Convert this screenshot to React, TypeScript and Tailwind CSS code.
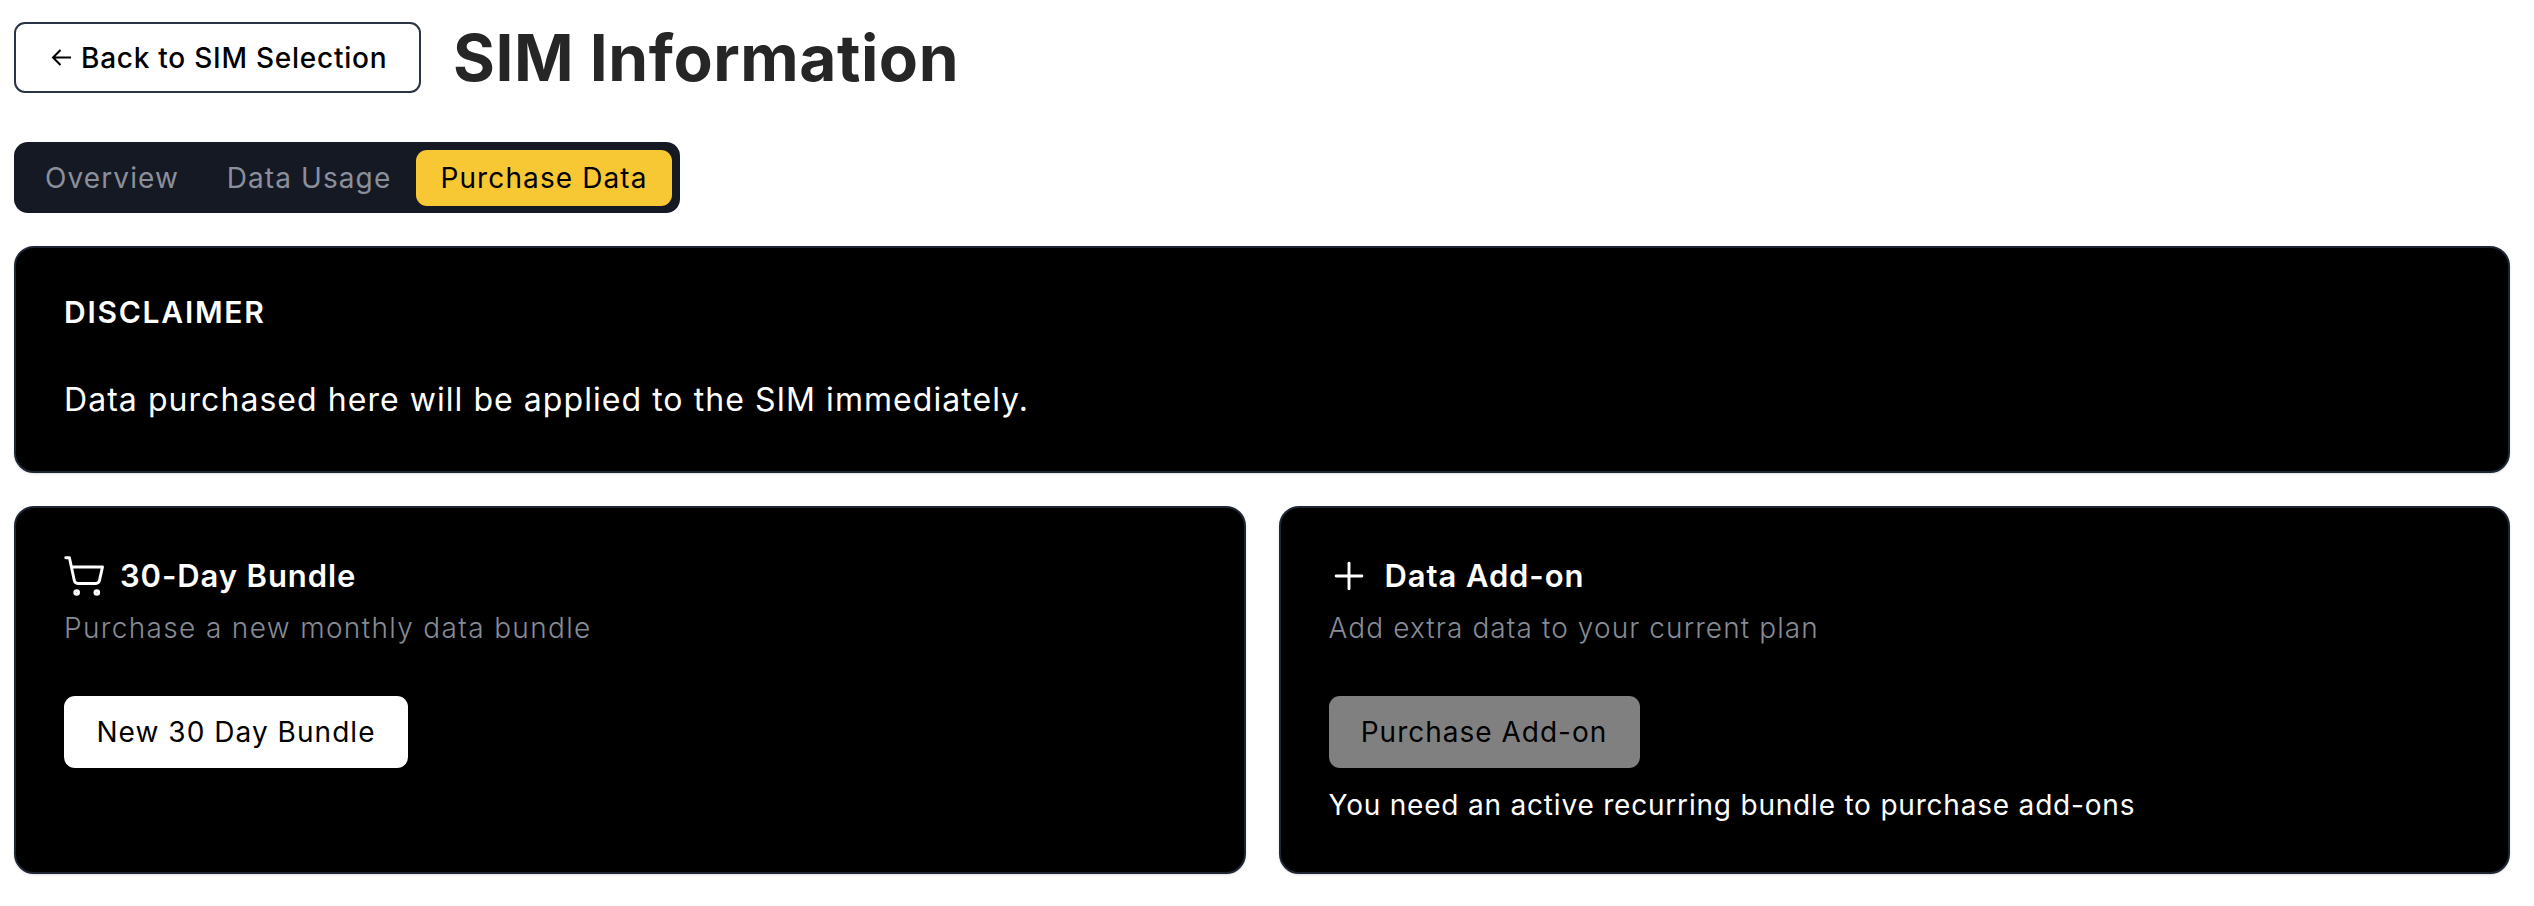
import React from 'react';
import {Plus, ShoppingCart} from 'lucide-react';

const App: React.FC = () => {
  return (
    <div className="min-h-[906px] bg-white pl-[14px] pr-[24px] pt-[22px] font-['Inter',sans-serif] text-black">
      <div className="flex items-center gap-[32px]">
        <button type="button"
                className="flex h-[71px] w-[407px] items-center gap-[10px] rounded-[11px] border-2 border-[#2a3444] bg-white pl-[35px] text-[28px] font-medium tracking-[0.75px]">
          <svg width="20" height="17" viewBox="0 0 20 17" fill="none" stroke="currentColor" strokeWidth="2">
            <path d="M20 8.5H2M9.5 1 2 8.5 9.5 16"/>
          </svg>
          Back to SIM Selection
        </button>
        <h1 className="text-[64px] font-bold leading-none tracking-[0.55px] text-[#262626]">SIM Information</h1>
      </div>

      <div className="mt-[49px] flex h-[71px] w-[666px] items-center rounded-[14px] bg-[#151924] px-[8px] text-[28px] font-normal tracking-[1.1px]">
        <span className="flex h-[56px] w-[180px] items-center justify-center text-[#8a8f9b]">Overview</span>
        <span className="flex h-[56px] w-[214px] items-center justify-center text-[#8a8f9b]">Data Usage</span>
        <span className="flex h-[56px] w-[256px] items-center justify-center rounded-[11px] bg-[#f8c734]">Purchase Data</span>
      </div>

      <div className="mt-[33px] h-[227px] rounded-[20px] border-2 border-[#1e2635] bg-black px-[48px] pt-[46px] text-white shadow-sm">
        <h2 className="text-[30px] font-semibold leading-[36px] tracking-[1.75px]">DISCLAIMER</h2>
        <p className="mt-[48px] text-[32px] leading-[44px] tracking-[1.05px]">Data purchased here will be applied to the SIM immediately.</p>
      </div>

      <div className="mt-[33px] grid grid-cols-2 gap-[33px]">
        <div className="h-[368px] rounded-[20px] border-2 border-[#1e2635] bg-black px-[48px] pt-[46px] text-white shadow-sm">
          <div className="flex items-center gap-[14px] text-[31px] font-semibold leading-[44px] tracking-[0.9px]">
            <ShoppingCart className="-ml-[2px] h-[44px] w-[44px]" strokeWidth={1.6}/>
            30-Day Bundle
          </div>
          <p className="mt-[10px] text-[28px] font-light leading-[40px] tracking-[1.35px] text-[#868b95]">Purchase a new monthly data bundle</p>
          <button type="button"
                  className="mt-[48px] flex h-[72px] w-[344px] items-center justify-center rounded-[11px] bg-white text-[28px] tracking-[1.05px] text-black">
            New 30 Day Bundle
          </button>
        </div>
        <div className="h-[368px] rounded-[20px] border-2 border-[#1e2635] bg-black px-[48px] pt-[46px] text-white shadow-sm">
          <div className="flex items-center gap-[14px] text-[31px] font-semibold leading-[44px] tracking-[0.9px]">
            <Plus className="-ml-[2px] h-[44px] w-[44px]" strokeWidth={1.6}/>
            Data Add-on
          </div>
          <p className="mt-[10px] text-[28px] font-light leading-[40px] tracking-[1.1px] text-[#868b95]">Add extra data to your current plan</p>
          <button type="button"
                  className="mt-[48px] flex h-[72px] w-[311px] items-center justify-center rounded-[11px] bg-[#808080] text-[28px] tracking-[1px] text-black">
            Purchase Add-on
          </button>
          <p className="mt-[17px] text-[28px] leading-[40px] tracking-[0.8px]">You need an active recurring bundle to purchase add-ons</p>
        </div>
      </div>
    </div>
  );
};

export default App;
